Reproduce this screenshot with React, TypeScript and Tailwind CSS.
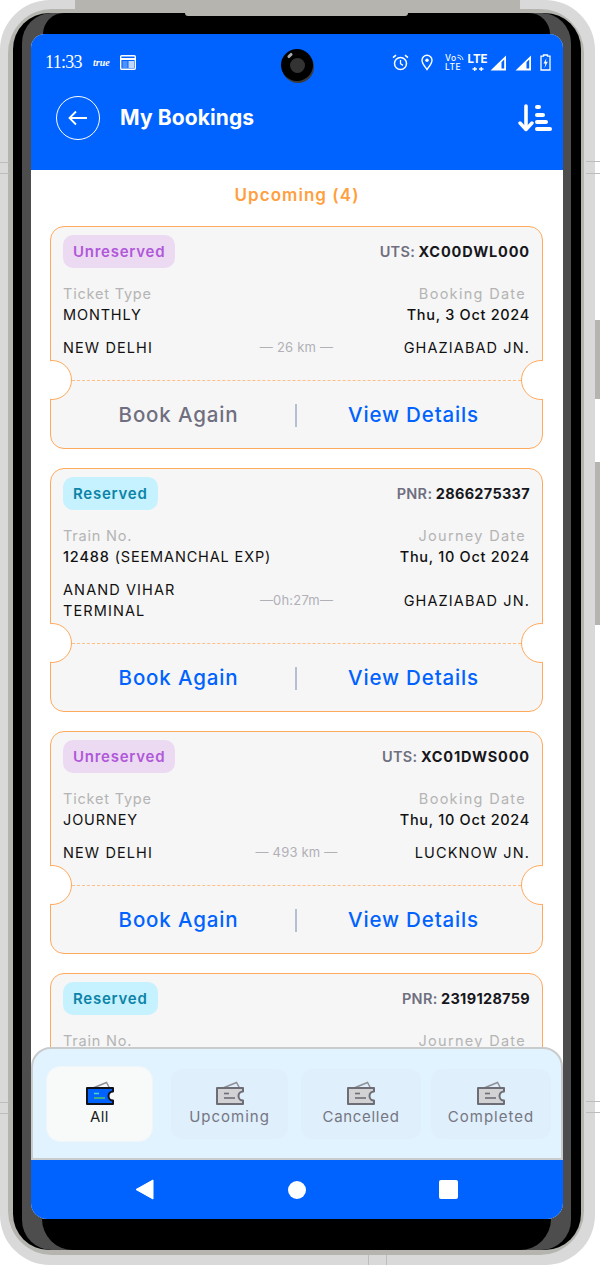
import React from "react";

const TicketIcon = ({ active }: { active?: boolean }) => {
  const stroke = active ? "#10131c" : "#6d6d76";
  const fill = active ? "#0062ff" : "#d2d2d4";
  const line1 = active ? "#4fd1c5" : "#6d6d76";
  const line2 = active ? "#4ac26b" : "#6d6d76";
  return (
    <svg width="30" height="25" viewBox="0 0 30 25" fill="none">
      <path d="M8 7 L21.5 1.5 L24.5 7" stroke="#8f8f98" strokeWidth="1.5" fill="none" />
      <path
        d="M2 7 H28 V10.5 A4.5 4.5 0 0 0 28 19.5 V23 H2 Z"
        fill={fill}
        stroke={stroke}
        strokeWidth="2"
        strokeLinejoin="round"
      />
      <path d="M9 12.5 H14" stroke={line1} strokeWidth="1.6" />
      <path d="M9 17 H20" stroke={line2} strokeWidth="1.6" />
    </svg>
  );
};

const SortIcon = () => (
  <svg width="34" height="28" viewBox="0 0 34 28" fill="none">
    <path d="M8 2 V25" stroke="white" strokeWidth="3.6" strokeLinecap="round" />
    <path d="M2 19 L8 25.5 L14 19" stroke="white" strokeWidth="3.4" strokeLinecap="round" strokeLinejoin="round" />
    <rect x="17" y="1" width="6" height="4" rx="2" fill="white" />
    <rect x="17" y="9" width="10" height="4" rx="2" fill="white" />
    <rect x="17" y="16" width="13" height="4" rx="2" fill="white" />
    <rect x="17" y="23" width="17" height="4" rx="2" fill="white" />
  </svg>
);

const StatusIcons = () => (
  <div className="flex items-center text-white">
    <svg width="17" height="17" viewBox="0 0 17 17" fill="none" className="mr-[12px]">
      <circle cx="8.5" cy="9.5" r="6" stroke="white" strokeWidth="1.5" />
      <path d="M8.5 6 V9.7 L11 11.4" stroke="white" strokeWidth="1.3" />
      <path d="M1 3.6 L4 1.2 M16 3.6 L13 1.2" stroke="white" strokeWidth="1.6" />
    </svg>
    <svg width="12" height="17" viewBox="0 0 12 17" fill="none" className="mr-[12px]">
      <path d="M6 15.5 C3.5 12 1 9.4 1 6.2 A5 5 0 0 1 11 6.2 C11 9.4 8.5 12 6 15.5 Z" stroke="white" strokeWidth="1.4" />
      <circle cx="6" cy="6.2" r="1.7" fill="white" />
    </svg>
    <div className="relative mr-[5px] w-[18px] text-[8.5px] font-medium leading-[8.5px] tracking-[0.5px]">
      <div>Vo</div>
      <div>LTE</div>
      <svg width="7" height="7" viewBox="0 0 7 7" fill="none" className="absolute right-[-1px] top-[0px]">
        <path d="M0.5 1.2 A5 5 0 0 1 6 6 M0.5 3.4 A3 3 0 0 1 3.8 6" stroke="white" strokeWidth="0.9" />
      </svg>
    </div>
    <div className="mr-[3px] flex w-[19px] flex-col items-center">
      <div className="text-[11.5px] font-bold leading-[11px]">LTE</div>
      <svg width="12" height="6" viewBox="0 0 12 6" className="mt-[1px]" fill="none">
        <path d="M0.5 3 H5 M2.75 1 V5 M7 3 H11.5 M9.25 1 V5" stroke="white" strokeWidth="1.3" />
      </svg>
    </div>
    <svg width="17" height="16" viewBox="0 0 17 16" className="mr-[8px]">
      <path d="M0.5 15.5 L16 0.5 V15.5 Z M11.5 13.5 H14.2 V4.6 L11.5 7.2 Z" fill="white" fillRule="evenodd" />
    </svg>
    <svg width="17" height="16" viewBox="0 0 17 16" className="mr-[8px]">
      <path d="M0.5 15.5 L16 0.5 V15.5 Z M11.5 13.5 H14.2 V4.6 L11.5 7.2 Z" fill="white" fillRule="evenodd" />
    </svg>
    <svg width="11" height="17" viewBox="0 0 11 17" fill="none">
      <path d="M3.5 1 H7.5 V2.2 H10 V16 H1 V2.2 H3.5 Z" stroke="white" strokeWidth="1.3" />
      <path d="M6.5 4 L3.5 9.5 H5.4 L4.5 14 L7.8 7.8 H5.8 Z" fill="white" />
    </svg>
  </div>
);

const Notch = ({ side }: { side: "left" | "right" }) => (
  <div
    className={
      side === "left"
        ? "absolute bottom-[48px] left-[-1px] h-[40px] w-[23px] overflow-hidden"
        : "absolute bottom-[48px] right-[-1px] h-[40px] w-[23px] overflow-hidden"
    }
  >
    <div
      className={
        side === "left"
          ? "absolute left-[-18px] top-0 size-[40px] rounded-full border border-[#ffa95c] bg-white"
          : "absolute right-[-18px] top-0 size-[40px] rounded-full border border-[#ffa95c] bg-white"
      }
    />
  </div>
);

type Booking = {
  reserved: boolean;
  code: string;
  id: string;
  label1: string;
  value1: React.ReactNode;
  label2: string;
  date: string;
  from: React.ReactNode;
  mid: string;
  to: string;
  bookMuted?: boolean;
};

const bookings: Booking[] = [
  {
    reserved: false,
    code: "UTS:",
    id: "XC00DWL000",
    label1: "Ticket Type",
    value1: "MONTHLY",
    label2: "Booking Date",
    date: "Thu, 3 Oct 2024",
    from: "NEW DELHI",
    mid: "— 26 km —",
    to: "GHAZIABAD JN.",
    bookMuted: true,
  },
  {
    reserved: true,
    code: "PNR:",
    id: "2866275337",
    label1: "Train No.",
    value1: (
      <>
        <span className="font-medium">12488</span> (SEEMANCHAL EXP)
      </>
    ),
    label2: "Journey Date",
    date: "Thu, 10 Oct 2024",
    from: "ANAND VIHAR TERMINAL",
    mid: "—0h:27m—",
    to: "GHAZIABAD JN.",
  },
  {
    reserved: false,
    code: "UTS:",
    id: "XC01DWS000",
    label1: "Ticket Type",
    value1: "JOURNEY",
    label2: "Booking Date",
    date: "Thu, 10 Oct 2024",
    from: "NEW DELHI",
    mid: "— 493 km —",
    to: "LUCKNOW JN.",
  },
  {
    reserved: true,
    code: "PNR:",
    id: "2319128759",
    label1: "Train No.",
    value1: "",
    label2: "Journey Date",
    date: "",
    from: "",
    mid: "",
    to: "",
  },
];

const BookingCard = ({ b }: { b: Booking }) => (
  <div className="relative rounded-[14px] border border-[#ffa95c] bg-[#f6f6f6]">
    <div className="pl-[12px] pr-[12px] pt-[8px]">
      <div className="flex items-center justify-between">
        <div
          className={
            b.reserved
              ? "flex h-[33px] items-center rounded-[10px] bg-[#c6f1fe] px-[10px] pt-[1px] text-[15px] font-semibold tracking-[0.75px] text-[#0b84a8]"
              : "flex h-[33px] items-center rounded-[10px] bg-[#ecdaf3] px-[10px] pt-[1px] text-[15px] font-semibold tracking-[0.75px] text-[#b058d8]"
          }
        >
          {b.reserved ? "Reserved" : "Unreserved"}
        </div>
        <div className="text-[14.5px] font-bold text-[#17171c]">
          <span className="font-semibold tracking-[0.3px] text-[#6f6f80]">{b.code}</span>{" "}
          <span className={b.reserved ? "tracking-[0.3px]" : "tracking-[0.85px]"}>{b.id}</span>
        </div>
      </div>
      <div className="mt-[15px] flex justify-between text-[14.5px] leading-[21px]">
        <div>
          <div className="tracking-[0.8px] text-[#b4b4b4]">{b.label1}</div>
          <div className="tracking-[0.85px] text-[#111]">{b.value1}</div>
        </div>
        <div className="text-right">
          <div className="pr-[4px] tracking-[1.3px] text-[#b4b4b4]">{b.label2}</div>
          <div className="font-medium tracking-[0.7px] text-[#111]">{b.date}</div>
        </div>
      </div>
      <div className="mt-[12px] grid min-h-[21px] grid-cols-[155px_1fr_155px] items-center text-[14.5px] leading-[21px] tracking-[1.1px] text-[#111]">
        <div>{b.from}</div>
        <div className="text-center text-[13px] tracking-[0.2px] text-[#b0b0b6]">{b.mid}</div>
        <div className="text-right">{b.to}</div>
      </div>
    </div>
    <div className="mx-[21px] mt-[22px] border-t border-dashed border-[#ffbe85]" />
    <div className="flex h-[67px] items-center pl-[11px] pr-[12px] pt-[2px] text-[20.5px] font-medium tracking-[0.85px] text-[#0062ff]">
      <div className={b.bookMuted ? "flex-1 text-center text-[#6f6f80]" : "flex-1 text-center"}>Book Again</div>
      <div className="h-[23px] w-[2px] bg-[#b4c0d0]" />
      <div className="flex-1 text-center">View Details</div>
    </div>
    <Notch side="left" />
    <Notch side="right" />
  </div>
);

const TabBar = () => (
  <div className="absolute inset-x-0 bottom-0 flex h-[113px] items-center rounded-t-[20px] border-2 border-[#c9cbcc] bg-[#e1f3ff] pl-[13px]">
    <div className="flex h-[76px] w-[107px] flex-col items-center justify-center rounded-[14px] border border-[#eef6fa] bg-[#f8fafa] text-[15px] tracking-[0.4px] text-[#1c1c22]">
      <TicketIcon active />
      <div className="mt-[1px] leading-[20px]">All</div>
    </div>
    <div className="ml-[18px] flex">
      <div className="flex h-[70px] w-[117px] flex-col items-center justify-center rounded-[12px] bg-[#dfeffb] text-[15px] tracking-[1px] text-[#767683]">
        <TicketIcon />
        <div className="mt-[1px] leading-[20px]">Upcoming</div>
      </div>
      <div className="ml-[13px] flex h-[70px] w-[120px] flex-col items-center justify-center rounded-[12px] bg-[#dfeffb] text-[15px] tracking-[0.7px] text-[#767683]">
        <TicketIcon />
        <div className="mt-[1px] leading-[20px]">Cancelled</div>
      </div>
      <div className="ml-[10px] flex h-[70px] w-[120px] flex-col items-center justify-center rounded-[12px] bg-[#dfeffb] text-[15px] tracking-[1px] text-[#767683]">
        <TicketIcon />
        <div className="mt-[1px] leading-[20px]">Completed</div>
      </div>
    </div>
  </div>
);

export default function App() {
  return (
    <div className="relative h-[1265px] w-[600px] overflow-hidden bg-white font-[family-name:Inter,sans-serif]">
      {/* side buttons of the phone */}
      <div className="absolute right-0 top-[320px] h-[79px] w-[5px] bg-[#b5b4ae]" />
      <div className="absolute right-0 top-[462px] h-[163px] w-[5px] bg-[#b5b4ae]" />

      <div className="h-[1265px] w-[595px] rounded-[50px] bg-[#d9d9d9] pb-[10px] pl-[8px] pr-[11px] pt-[9px]">
        <div className="h-full rounded-[44px] bg-[#b5b4ae] pb-[5px] pl-[5px] pr-[3px] pt-[4px]">
          <div className="h-full rounded-[36px] bg-black pl-[9px] pr-[10px]">
            <div className="flex h-full flex-col rounded-[30px] bg-[#4d4d4d]">
              <div className="mx-[21px] h-[21px] shrink-0 rounded-t-[28px] bg-black" />
              <div className="relative ml-[9px] mr-[8px] flex h-[1185px] shrink-0 flex-col overflow-hidden rounded-b-[16px] rounded-t-[14px] bg-white">
                <div className="h-[136px] shrink-0 bg-[#0062ff] text-white">
                  <div className="flex h-[56px] items-center justify-between pl-[14px] pr-[12px] pt-[1px]">
                    <div className="flex items-center">
                      <span className="w-[40px] font-[family-name:'Liberation_Serif',serif] text-[18px] tracking-[-0.7px]">11:33</span>
                      <span className="ml-[8px] font-[family-name:'Liberation_Serif',serif] text-[10px] font-bold italic">true</span>
                      <svg width="16" height="15" viewBox="0 0 16 15" className="ml-[10px]" fill="none">
                        <rect x="0.7" y="0.7" width="14.6" height="13.6" rx="1" stroke="white" strokeWidth="1.4" />
                        <path d="M1 4 H15" stroke="white" strokeWidth="1.8" />
                        <rect x="2.5" y="6" width="5" height="7" fill="white" opacity="0.3" />
                        <rect x="8.5" y="6" width="5.5" height="7" fill="white" opacity="0.75" />
                      </svg>
                    </div>
                    <StatusIcons />
                  </div>
                  <div className="flex h-[56px] items-center pl-[25px] pr-[11px]">
                    <div className="flex size-[44px] items-center justify-center rounded-full border-[1.5px] border-white">
                      <svg width="20" height="16" viewBox="0 0 20 16" fill="none">
                        <path d="M1.5 8 H19 M8 1.5 L1.5 8 L8 14.5" stroke="white" strokeWidth="1.8" />
                      </svg>
                    </div>
                    <div className="ml-[20px] flex-1 text-[21px] font-bold tracking-[0.1px]">My Bookings</div>
                    <SortIcon />
                  </div>
                </div>

                <div className="relative min-h-0 flex-1 overflow-hidden">
                  <div className="mt-[14px] text-center text-[17px] font-semibold leading-[22px] tracking-[1.05px] text-[#ff9f3f]">
                    Upcoming (4)
                  </div>
                  <div className="mt-[20px] flex flex-col gap-[19px] pl-[19px] pr-[20px]">
                    {bookings.map((b) => (
                      <BookingCard key={b.id} b={b} />
                    ))}
                  </div>
                  <TabBar />
                </div>

                <div className="flex h-[59px] shrink-0 items-center bg-[#0062ff]">
                  <svg width="19" height="21" viewBox="0 0 19 21" className="ml-[104px]">
                    <path d="M18 1 V20 L1 10.5 Z" fill="white" stroke="white" strokeLinejoin="round" />
                  </svg>
                  <div className="ml-[134px] size-[18px] rounded-full bg-white" />
                  <div className="ml-[133px] size-[19px] rounded-[2px] bg-white" />
                </div>

                {/* camera hole */}
                <div className="absolute left-[250px] top-[15px] flex size-[32px] items-center justify-center rounded-full bg-black shadow-[1px_2px_0_#3a3a3a]">
                  <div className="size-[15px] rounded-full bg-[#333]" />
                  <div className="absolute left-[6px] top-[5px] h-[3px] w-[6px] -rotate-45 rounded-full bg-[#aaa]" />
                </div>
              </div>
              <div className="mx-[20px] min-h-0 flex-1 rounded-b-[32px] bg-black" />
            </div>
          </div>
        </div>
      </div>

      {/* top edge of the phone body */}
      <div className="absolute left-[75px] top-0 h-[13px] w-[445px] bg-[#b5b4ae]" />
      <div className="absolute left-[185px] top-[13px] h-[3px] w-[223px] rounded-b-[3px] bg-[#b5b4ae]" />

      {/* faint guide lines round the phone */}
      <div className="absolute left-0 top-[162px] h-px w-[9px] bg-[#bdbdbd]" />
      <div className="absolute left-0 top-[173px] h-px w-[9px] bg-[#bdbdbd]" />
      <div className="absolute right-0 top-[161px] h-px w-[14px] bg-[#bdbdbd]" />
      <div className="absolute right-0 top-[173px] h-px w-[14px] bg-[#bdbdbd]" />
      <div className="absolute left-0 top-[1102px] h-px w-[9px] bg-[#bdbdbd]" />
      <div className="absolute left-0 top-[1113px] h-px w-[9px] bg-[#bdbdbd]" />
      <div className="absolute right-0 top-[1101px] h-px w-[14px] bg-[#bdbdbd]" />
      <div className="absolute right-0 top-[1112px] h-px w-[14px] bg-[#bdbdbd]" />
      <div className="absolute left-[368px] top-[1255px] h-[10px] w-px bg-[#bdbdbd]" />
      <div className="absolute left-[386px] top-[1255px] h-[10px] w-px bg-[#bdbdbd]" />
    </div>
  );
}
